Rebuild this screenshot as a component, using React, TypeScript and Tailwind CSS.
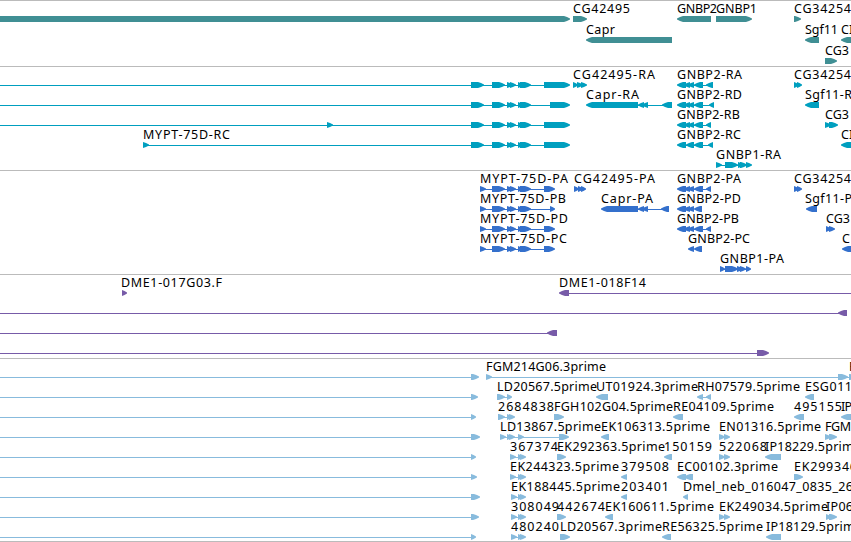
type Dir = 'r' | 'l';

interface Feature {
  label?: string;
  x?: number; // label start
  end?: number; // label end, left out when it runs off the view
  dir?: Dir;
  exons: [number, number][];
  line?: [number, number];
}

interface TrackData {
  name: string;
  color: string;
  className: string;
  pitch: number;
  rows: Feature[][];
}

const VIEW_WIDTH = 851;

const f = (
  label: string,
  x: number,
  end: number | undefined,
  dir: Dir,
  exons: [number, number][],
  line?: [number, number],
): Feature => ({ label, x, end, dir, exons, line });

const bare = (dir: Dir, exons: [number, number][], line?: [number, number]): Feature => ({ dir, exons, line });

const myptExons = (last: number): [number, number][] => [
  [471, 484], [492, 505], [507, 513], [510, 516], [518, 523], [520, 531], [last, 570],
];
const myptCds = (last: number): [number, number][] => [
  [480, 486], [492, 505], [507, 513], [510, 516], [518, 523], [520, 531], [last, 555],
];
const gnbp2: [number, number][] = [[677, 686], [684, 690], [688, 694], [694, 703]];
const estSmall: [number, number][] = [[511, 517], [518, 523], [520, 526]];
const pair: [number, number][] = [[719, 725], [724, 730]];
const incoming = (tip: number): Feature => bare('r', [[471, tip]], [0, 471]);

const tracks: TrackData[] = [
  {
    name: 'genes',
    color: '#408f94',
    className: 'h-[66px]',
    pitch: 21,
    rows: [
      [
        bare('r', [[-10, 570]]),
        f('CG42495', 573, 630, 'r', [[573, 587]]),
        f('GNBP2', 677, 717, 'l', [[677, 711]]),
        f('GNBP1', 716, 757, 'r', [[716, 752]]),
        f('CG34254', 794, 851, 'r', [[794, 801]]),
      ],
      [
        f('Capr', 586, 615, 'l', [[586, 672]]),
        f('Sgf11', 805, 838, 'l', [[805, 819]]),
        f('CI', 841, undefined, 'l', [[841, 870]]),
      ],
      [f('CG3', 825, 849, 'r', [[825, 837]])],
    ],
  },
  {
    name: 'transcripts',
    color: '#009fbf',
    className: 'h-[104px]',
    pitch: 20,
    rows: [
      [
        bare('r', myptExons(544), [0, 560]),
        f('CG42495-RA', 573, 655, 'r', [[573, 578], [577, 583], [581, 587]]),
        f('GNBP2-RA', 677, 742, 'l', [...gnbp2, [706, 713]], [680, 710]),
        f('CG34254', 794, 851, 'r', [[794, 799], [797, 802]]),
      ],
      [
        bare('r', myptExons(550), [0, 560]),
        f('Capr-RA', 586, 639, 'l', [[586, 638], [638, 644], [642, 648], [662, 672]], [630, 665]),
        f('GNBP2-RD', 677, 742, 'l', [...gnbp2, [709, 714]], [680, 712]),
        f('Sgf11-R', 805, 852, 'l', [[805, 819]]),
      ],
      [
        bare('r', [[327, 333], ...myptExons(544)], [0, 560]),
        f('GNBP2-RB', 677, 740, 'l', [...gnbp2, [706, 711]], [680, 710]),
        f('CG3', 825, 849, 'r', [[825, 831], [829, 838]]),
      ],
      [
        f('MYPT-75D-RC', 143, 230, 'r', [[143, 149], ...myptExons(544)], [143, 560]),
        f('GNBP2-RC', 677, 741, 'l', [[677, 686], [686, 694], [694, 703], [708, 713]], [680, 710]),
        f('CI', 841, undefined, 'l', [[841, 870]]),
      ],
      [f('GNBP1-RA', 716, 781, 'r', [[716, 722], [725, 738], [738, 744], [740, 747], [746, 752]], [716, 750])],
    ],
  },
  {
    name: 'proteins',
    color: '#3470cc',
    className: 'h-[104px]',
    pitch: 20,
    rows: [
      [
        f('MYPT-75D-PA', 480, 568, 'r', myptCds(544), [480, 550]),
        f('CG42495-PA', 574, 655, 'r', [[574, 579], [578, 583], [581, 586]]),
        f('GNBP2-PA', 677, 741, 'l', [...gnbp2, [706, 711]], [680, 710]),
        f('CG34254', 794, 851, 'r', [[794, 799], [797, 802]]),
      ],
      [
        f('MYPT-75D-PB', 480, 566, 'r', myptCds(550), [480, 552]),
        f('Capr-PA', 601, 653, 'l', [[601, 638], [638, 644], [642, 648], [661, 669]], [630, 665]),
        f('GNBP2-PD', 677, 741, 'l', [...gnbp2.slice(0, 3), [694, 702]]),
        f('Sgf11-P', 805, 852, 'l', [[806, 817]]),
      ],
      [
        f('MYPT-75D-PD', 480, 568, 'r', myptCds(544), [480, 550]),
        f('GNBP2-PB', 677, 739, 'l', [...gnbp2, [706, 711]], [680, 710]),
        f('CG3', 826, 850, 'r', [[826, 831], [829, 835]]),
      ],
      [
        f('MYPT-75D-PC', 480, 567, 'r', myptCds(544), [480, 550]),
        f('GNBP2-PC', 688, 750, 'l', [[688, 694], [694, 702]]),
        f('C', 842, undefined, 'l', [[842, 870]]),
      ],
      [f('GNBP1-PA', 720, 784, 'r', [[720, 725], [725, 738], [737, 743], [740, 746], [746, 751]], [720, 749])],
    ],
  },
  {
    name: 'clones',
    color: '#775ba8',
    className: 'h-[84px]',
    pitch: 20,
    rows: [
      [
        f('DME1-017G03.F', 121, 222, 'r', [[122, 127]]),
        f('DME1-018F14', 559, 646, 'l', [[559, 569]], [566, 851]),
      ],
      [bare('l', [[838, 847]], [0, 840])],
      [bare('l', [[547, 557]], [0, 549])],
      [bare('r', [[757, 769]], [0, 757])],
    ],
  },
  {
    name: 'ests',
    color: '#88bbdd',
    className: 'h-[184px] border-b',
    pitch: 20,
    rows: [
      [
        incoming(479),
        f('FGM214G06.3prime', 486, 606, 'r', [[486, 492], [838, 848], [849, 856]], [486, 851]),
        f('F', 849, undefined, 'r', []),
      ],
      [
        incoming(478),
        f('LD20567.5prime', 497, 597, 'r', [[497, 505], [507, 512]], [497, 509]),
        f('UT01924.3prime', 596, 698, 'l', [[596, 608]]),
        f('RH07579.5prime', 697, 800, 'l', [[697, 703], [706, 711]], [699, 709]),
        f('ESG011', 805, 852, 'l', [[805, 814]]),
      ],
      [
        incoming(476),
        f('2684838', 498, 554, 'r', [[498, 505], [507, 512], [509, 515]], [498, 510]),
        f('FGH102G04.5prime', 554, 673, 'r', [[554, 564]]),
        f('RE04109.5prime', 673, 774, 'l', [[673, 683]]),
        f('495155', 794, 842, 'l', [[794, 804]]),
        f('IP', 841, 852, 'l', [[841, 870]]),
      ],
      [
        incoming(480),
        f('LD13867.5prime', 500, 601, 'r', [[500, 506], [507, 512], [509, 515], [518, 524], [559, 569]], [500, 562]),
        f('EK106313.5prime', 601, 710, 'l', [[601, 609]]),
        f('EN01316.5prime', 719, 821, 'r', pair),
        f('FGM', 825, 851, 'r', [[825, 831], [829, 837]]),
      ],
      [
        incoming(476),
        f('367374', 510, 558, 'r', [[510, 516], [518, 523], [520, 526]], [510, 520]),
        f('EK292363.5prime', 557, 665, 'r', [[557, 566]]),
        f('150159', 664, 712, 'l', [[664, 672]]),
        f('522068', 719, 767, 'r', pair),
        f('IP18229.5prime', 765, 861, 'l', [[765, 781]]),
      ],
      [
        incoming(477),
        f('EK244323.5prime', 510, 619, 'r', [[510, 516], [518, 523], [520, 526]], [510, 520]),
        f('379508', 621, 669, 'l', [[621, 627]]),
        f('EC00102.3prime', 677, 778, 'l', [[677, 686], [684, 693]]),
        f('EK299346', 794, 857, 'r', [[794, 803]]),
      ],
      [
        incoming(480),
        f('EK188445.5prime', 511, 620, 'r', estSmall, [511, 520]),
        f('203401', 621, 669, 'l', [[621, 627]]),
        f('Dmel_neb_016047_0835_26', 683, 853, 'l', [[683, 688]]),
      ],
      [
        incoming(479),
        f('308049', 511, 559, 'r', estSmall, [511, 520]),
        f('442674', 557, 605, 'r', [[557, 566]]),
        f('EK160611.5prime', 605, 714, 'l', [[605, 613]]),
        f('EK249034.5prime', 719, 828, 'r', pair),
        f('IP06', 826, 853, 'r', [[826, 831], [829, 837]]),
      ],
      [
        incoming(476),
        f('480240', 511, 559, 'r', estSmall, [511, 520]),
        f('LD20567.3prime', 560, 662, 'r', [[560, 570]]),
        f('RE56325.5prime', 662, 763, 'l', [[662, 671]]),
        f('IP18129.5prime', 766, 862, 'l', [[766, 781]]),
      ],
    ],
  },
];

// Exon box that narrows to a point on the strand side
function exonPoints(x1: number, x2: number, y: number, dir: Dir) {
  const head = Math.min(6, x2 - x1);
  const tip = dir === 'r' ? x2 : x1;
  const back = dir === 'r' ? x1 : x2;
  const step = dir === 'r' ? -1 : 1;
  const neck = tip + step * head;
  const mid = tip + step * head * 0.5;
  return `${back},${y - 3} ${neck},${y - 3} ${mid},${y - 2} ${tip},${y - 0.5} ${tip},${y + 0.5} ${mid},${y + 2} ${neck},${y + 3} ${back},${y + 3}`;
}

function FeatureGlyph({ feature, top, color }: { feature: Feature; top: number; color: string }) {
  const { label, x = 0, end, dir = 'r', exons, line } = feature;
  return (
    <g fill={color}>
      {line && <rect x={line[0]} y={top + 19} width={line[1] - line[0]} height={1} />}
      {exons.map(([a, b], i) => (
        <polygon key={i} points={exonPoints(a, b, top + 19, dir)} />
      ))}
      {label && (
        <text
          x={x}
          y={top + 13}
          textLength={end ? end - x : undefined}
          className="fill-black font-['Noto_Sans','DejaVu_Sans',sans-serif] text-[12.5px]"
        >
          {label}
        </text>
      )}
    </g>
  );
}

function Track({ track }: { track: TrackData }) {
  return (
    <section className={`border-t border-[#bbbbbb] overflow-hidden ${track.className}`}>
      <svg width={VIEW_WIDTH} height="100%" className="-mt-px block overflow-visible">
        {track.rows.map((row, r) =>
          row.map((feature, i) => (
            <FeatureGlyph key={`${r}-${i}`} feature={feature} top={r * track.pitch} color={track.color} />
          )),
        )}
      </svg>
    </section>
  );
}

export default function App() {
  return (
    <main className="flex h-[542px] w-[851px] flex-col overflow-hidden bg-white">
      {tracks.map((track) => (
        <Track key={track.name} track={track} />
      ))}
    </main>
  );
}
